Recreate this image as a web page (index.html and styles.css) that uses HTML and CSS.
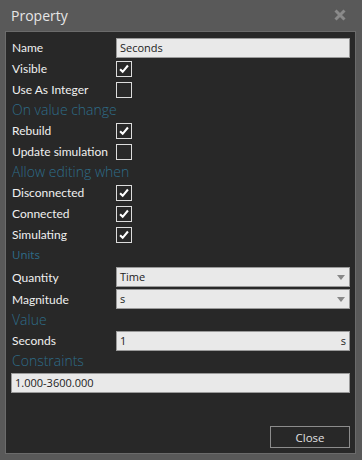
FILE: index.html
```html
<!DOCTYPE html>
<html lang="en">
<head>
  <meta charset="UTF-8">
  <title>Property</title>
  <link rel="stylesheet" href="styles.css">
</head>
<body>
  <div class="dialog">
    <div class="titlebar">
      <span class="title">Property</span>
      <svg class="close-x" width="12" height="12" viewBox="0 0 12 12"><path d="M1.5 1.5L10.5 10.5M10.5 1.5L1.5 10.5" stroke="#8a8a8a" stroke-width="3"/></svg>
    </div>

    <div class="panel">
      <div class="row">
        <label>Name</label>
        <div class="field">Seconds</div>
      </div>
      <div class="row">
        <label>Visible</label>
        <span class="check on"><svg viewBox="0 0 16 16"><path d="M3.5 8.2L6.5 11.2L12.5 4" fill="none" stroke="#fff" stroke-width="2.4"/></svg></span>
      </div>
      <div class="row">
        <label>Use As Integer</label>
        <span class="check"></span>
      </div>

      <div class="heading">On value change</div>
      <div class="row">
        <label>Rebuild</label>
        <span class="check on"><svg viewBox="0 0 16 16"><path d="M3.5 8.2L6.5 11.2L12.5 4" fill="none" stroke="#fff" stroke-width="2.4"/></svg></span>
      </div>
      <div class="row">
        <label>Update simulation</label>
        <span class="check"></span>
      </div>

      <div class="heading">Allow editing when</div>
      <div class="row">
        <label>Disconnected</label>
        <span class="check on"><svg viewBox="0 0 16 16"><path d="M3.5 8.2L6.5 11.2L12.5 4" fill="none" stroke="#fff" stroke-width="2.4"/></svg></span>
      </div>
      <div class="row">
        <label>Connected</label>
        <span class="check on"><svg viewBox="0 0 16 16"><path d="M3.5 8.2L6.5 11.2L12.5 4" fill="none" stroke="#fff" stroke-width="2.4"/></svg></span>
      </div>
      <div class="row">
        <label>Simulating</label>
        <span class="check on"><svg viewBox="0 0 16 16"><path d="M3.5 8.2L6.5 11.2L12.5 4" fill="none" stroke="#fff" stroke-width="2.4"/></svg></span>
      </div>

      <div class="heading small">Units</div>
      <div class="row tall">
        <label>Quantity</label>
        <div class="field select">Time<span class="arrow"></span></div>
      </div>
      <div class="row tall">
        <label>Magnitude</label>
        <div class="field select">s<span class="arrow"></span></div>
      </div>

      <div class="heading">Value</div>
      <div class="row">
        <label>Seconds</label>
        <div class="field unit">1<span>s</span></div>
      </div>

      <div class="heading">Constraints</div>
      <div class="field wide">1.000-3600.000</div>

      <div class="footer">
        <button type="button">Close</button>
      </div>
    </div>
  </div>
</body>
</html>
```

FILE: styles.css
```css
body { margin: 0; background: #595959; font-family: "Open Sans", "Noto Sans", sans-serif; font-size: 11.5px; color: #f0f0f0; }
.dialog { width: 362px; height: 460px; display: flex; flex-direction: column; }
.titlebar { height: 31px; display: flex; align-items: center; justify-content: space-between; padding: 0 16px 0 11px; box-sizing: border-box; }
.title { font-size: 14px; color: #e6e6e6; }
.close-x { display: block; margin-top: -2px; }
.panel { margin: 0 6px 6px 5px; flex: 1; background: #282828; border: 1px solid #6b6b6b; padding: 5px 5px 5px 5px; display: flex; flex-direction: column; }
.row { height: 21px; display: flex; align-items: center; }
.row.tall { height: 22px; }
.row label { width: 104px; padding-left: 1px; font-family: Lato, "Open Sans", sans-serif; font-size: 12px; }
.heading { height: 20px; line-height: 20px; font-size: 14px; font-weight: 300; color: #2e6c88; padding-left: 1px; }
.heading.small { font-size: 11.5px; font-weight: 400; height: 21px; }
.check { width: 14px; height: 14px; border: 1px solid #dcdcdc; display: inline-block; }
.check svg { display: block; width: 14px; height: 14px; }
.field { flex: 1; height: 18px; line-height: 18px; background: #e9e9e9; border: 1px solid #9a9a9a; color: #222; font-size: 11px; padding: 0 3px; display: flex; align-items: center; }
.field.select { justify-content: space-between; }
.arrow { width: 0; height: 0; border-left: 4px solid transparent; border-right: 4px solid transparent; border-top: 5px solid #888; margin-right: 1px; }
.field.unit { justify-content: space-between; }
.field.wide { flex: none; height: 18px; margin-top: 2px; }
.footer { margin-top: auto; display: flex; justify-content: flex-end; }
button { width: 80px; height: 22px; background: transparent; border: 1px solid #8c8c8c; color: #e0e0e0; font-family: inherit; font-size: 11.5px; }
```
